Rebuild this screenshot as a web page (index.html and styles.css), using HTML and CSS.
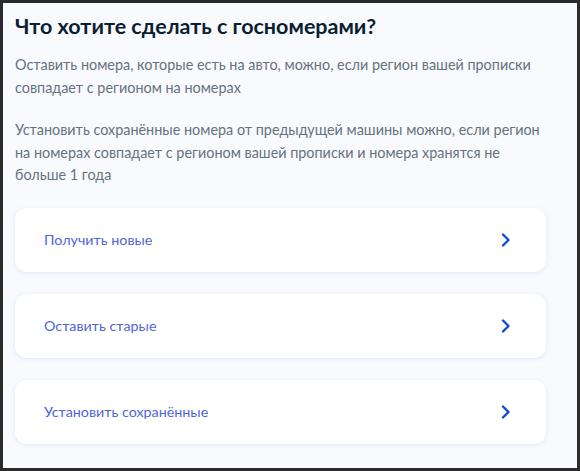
FILE: index.html
```html
<!DOCTYPE html>
<html lang="ru">
<head>
<meta charset="utf-8">
<link rel="stylesheet" href="styles.css">
</head>
<body>
<div class="frame">
  <h1 class="title">Что хотите сделать с госномерами?</h1>
  <p class="text">Оставить номера, которые есть на авто, можно, если регион вашей прописки совпадает с регионом на номерах</p>
  <p class="text">Установить сохранённые номера от предыдущей машины можно, если регион на номерах совпадает с регионом вашей прописки и номера хранятся не больше 1 года</p>
  <div class="options">
    <a class="option" href="#"><span>Получить новые</span><svg class="chev" viewBox="0 0 10 14" width="10" height="14"><path d="M2 1.5 L7.5 7 L2 12.5" fill="none" stroke="#0d4cd3" stroke-width="2.4" stroke-linecap="round" stroke-linejoin="round"/></svg></a>
    <a class="option" href="#"><span>Оставить старые</span><svg class="chev" viewBox="0 0 10 14" width="10" height="14"><path d="M2 1.5 L7.5 7 L2 12.5" fill="none" stroke="#0d4cd3" stroke-width="2.4" stroke-linecap="round" stroke-linejoin="round"/></svg></a>
    <a class="option" href="#"><span>Установить сохранённые</span><svg class="chev" viewBox="0 0 10 14" width="10" height="14"><path d="M2 1.5 L7.5 7 L2 12.5" fill="none" stroke="#0d4cd3" stroke-width="2.4" stroke-linecap="round" stroke-linejoin="round"/></svg></a>
  </div>
</div>
</body>
</html>
```
FILE: styles.css
```css
* { box-sizing: border-box; }
html, body { margin: 0; padding: 0; background: #2b2b2b; }
body { width: 580px; height: 471px; overflow: hidden; font-family: Lato, "Noto Sans", sans-serif; }
.frame {
  width: 580px;
  height: 471px;
  border: 3px solid #2b2b2b;
  background: #f8fafe;
  padding: 9px 31px 0 12px;
}
.title {
  margin: 0;
  font-size: 21.5px;
  font-weight: 700;
  line-height: 28px;
  color: #0b1f33;
}
.text {
  margin: 14px 0 0;
  font-size: 14.4px;
  line-height: 22.5px;
  color: #66727f;
}
.text + .text { margin-top: 20px; }
.options {
  margin-top: 21px;
  display: flex;
  flex-direction: column;
  gap: 22px;
}
.option {
  height: 64px;
  background: #fff;
  border-radius: 12px;
  box-shadow: 0 1px 4px rgba(160, 175, 215, 0.25);
  display: flex;
  align-items: center;
  justify-content: space-between;
  padding: 0 35px 0 29px;
  text-decoration: none;
  color: #4f66d6;
  font-size: 14.3px;
}
.chev { display: block; }
```
